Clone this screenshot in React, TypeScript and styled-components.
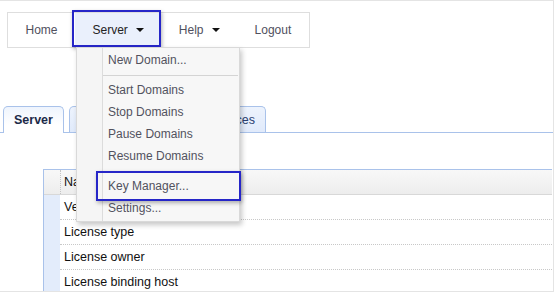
import React from 'react';
import styled, { createGlobalStyle, css } from 'styled-components';

const Global = createGlobalStyle`
  html, body { margin: 0; padding: 0; background: #fff; }
  body { font-family: "Liberation Sans", Arial, sans-serif; }
  * { box-sizing: border-box; }
`;

const Frame = styled.div`
  position: relative;
  width: 554px;
  height: 292px;
  overflow: hidden;
  border-top: 1px solid #e4e4e4;
  border-right: 1px solid #e4e4e4;
  border-bottom: 1px solid #e4e4e4;
`;

const NavBar = styled.nav`
  margin: 11px 0 0 7px;
  width: 303px;
  height: 36px;
  border: 1px solid #dedede;
  display: flex;
  align-items: stretch;
  background: #fff;
`;

const NavItem = styled.div<{ $active?: boolean }>`
  position: relative;
  display: flex;
  align-items: center;
  gap: 8px;
  padding: 0 17.5px;
  font-size: 12px;
  color: #50505e;
  ${(p) =>
    p.$active &&
    css`
      background: #eaf0fc;
      color: #222;
      &::after {
        content: '';
        position: absolute;
        left: -3px;
        right: 0;
        top: -3px;
        bottom: 0;
        border: 2px solid #2626c8;
        box-shadow: 1px 2px 4px rgba(0, 0, 0, 0.3);
        pointer-events: none;
      }
    `}
`;

const Caret = () => (
  <svg width="8" height="4" viewBox="0 0 8 4">
    <polygon points="0,0 8,0 4,4" fill="#111" />
  </svg>
);

const Menu = styled.div`
  position: absolute;
  top: 100%;
  left: 1px;
  width: 164px;
  z-index: 10;
  display: flex;
  background: #f7f7f7;
  border: 1px solid #d9d9d9;
  box-shadow: 2px 3px 5px rgba(0, 0, 0, 0.22);
`;

const Gutter = styled.div`
  width: 26px;
  border-right: 1px solid #dcdcdc;
  background: #f5f5f5;
`;

const MenuList = styled.div`
  flex: 1;
  padding: 1px 0 2px;
`;

const MenuItem = styled.div<{ $marked?: boolean }>`
  position: relative;
  height: 22px;
  line-height: 22px;
  padding-left: 5px;
  font-size: 12px;
  color: #52525e;
  white-space: nowrap;
  ${(p) =>
    p.$marked &&
    css`
      &::after {
        content: '';
        position: absolute;
        left: -7px;
        right: -2px;
        top: -4px;
        bottom: -4px;
        border: 2px solid #2626c8;
        box-shadow: 1px 2px 4px rgba(0, 0, 0, 0.3);
        pointer-events: none;
      }
    `}
`;

const Separator = styled.div`
  height: 1px;
  background: #d4d4d4;
  margin: 4px 1px 3px 0;
`;

const TabBar = styled.div`
  margin-top: 58px;
  height: 27px;
  display: flex;
  align-items: flex-end;
  gap: 5px;
  padding-left: 3px;
  border-bottom: 1px solid #a9c2ea;
`;

const Tab = styled.div<{ $active?: boolean }>`
  height: 26px;
  display: flex;
  align-items: center;
  padding: 0 10px;
  font-size: 12.5px;
  white-space: nowrap;
  border: 1px solid #a9c2ea;
  border-bottom: none;
  border-radius: 5px 5px 0 0;
  color: #2b4170;
  background: linear-gradient(#edf3fd, #e0eafb);
  ${(p) =>
    p.$active &&
    css`
      height: 27px;
      margin-bottom: -1px;
      font-weight: bold;
      color: #1c2a48;
      background: linear-gradient(#eef4fd, #ffffff 70%);
    `}
`;

const Table = styled.div`
  margin: 36px 0 0 43px;
  width: 509px;
  border-left: 1px solid #a9c2ea;
  border-top: 1px solid #a9c2ea;
`;

const HeadRow = styled.div`
  display: grid;
  grid-template-columns: 16px 1fr;
  height: 25px;
  border-bottom: 1px solid #d8d8d8;
  background: linear-gradient(#f8f8f8, #ededed);
`;

const HeadCell = styled.div`
  display: flex;
  align-items: center;
  padding-left: 3px;
  border-left: 1px dotted #c4c4c4;
  font-size: 12.5px;
  color: #111;
`;

const Row = styled.div`
  display: grid;
  grid-template-columns: 16px 1fr;
  height: 25px;
`;

const Marker = styled.div<{ $head?: boolean }>`
  background: ${(p) => (p.$head ? 'transparent' : '#e3ecfb')};
`;

const Cell = styled.div`
  display: flex;
  align-items: center;
  padding-left: 4px;
  border-bottom: 1px dotted #c8c8c8;
  font-size: 12.5px;
  color: #111;
  white-space: nowrap;
`;

const rows = ['Version', 'License type', 'License owner', 'License binding host'];

export default function App() {
  return (
    <>
      <Global />
      <Frame>
        <NavBar>
          <NavItem>Home</NavItem>
          <NavItem $active>
            Server <Caret />
            <Menu>
              <Gutter />
              <MenuList>
                <MenuItem>New Domain...</MenuItem>
                <Separator />
                <MenuItem>Start Domains</MenuItem>
                <MenuItem>Stop Domains</MenuItem>
                <MenuItem>Pause Domains</MenuItem>
                <MenuItem>Resume Domains</MenuItem>
                <Separator />
                <MenuItem $marked>Key Manager...</MenuItem>
                <MenuItem>Settings...</MenuItem>
              </MenuList>
            </Menu>
          </NavItem>
          <NavItem>
            Help <Caret />
          </NavItem>
          <NavItem>Logout</NavItem>
        </NavBar>
        <TabBar>
          <Tab $active>Server</Tab>
          <Tab>Configurations</Tab>
          <Tab>Preferences</Tab>
        </TabBar>
        <Table>
          <HeadRow>
            <Marker $head />
            <HeadCell>Name</HeadCell>
          </HeadRow>
          {rows.map((r) => (
            <Row key={r}>
              <Marker />
              <Cell>{r}</Cell>
            </Row>
          ))}
        </Table>
      </Frame>
    </>
  );
}
